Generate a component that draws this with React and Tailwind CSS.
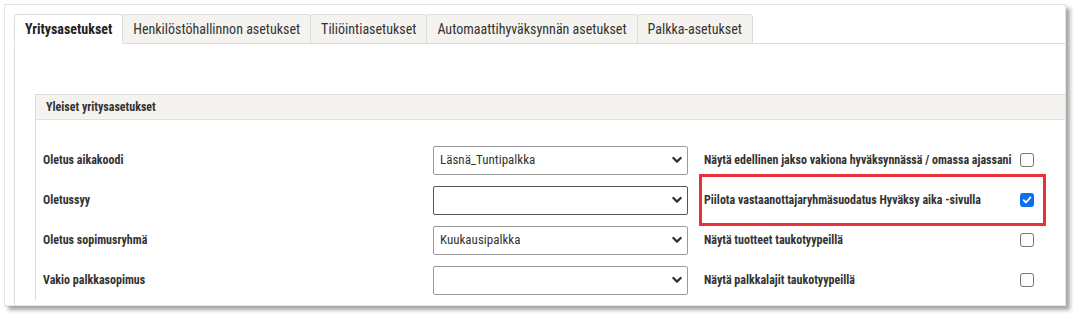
import React from "react";

const FONT = '"Roboto Condensed", "Liberation Sans Narrow", "Arial Narrow", Roboto, sans-serif';

const tabs = [
  { label: "Yritysasetukset", active: true },
  { label: "Henkilöstöhallinnon asetukset" },
  { label: "Tiliöintiasetukset" },
  { label: "Automaattihyväksynnän asetukset" },
  { label: "Palkka-asetukset" },
];

const rows = [
  { label: "Oletus aikakoodi", value: "Läsnä_Tuntipalkka", right: "Näytä edellinen jakso vakiona hyväksynnässä / omassa ajassani", checked: false },
  { label: "Oletussyy", value: "", right: "Piilota vastaanottajaryhmäsuodatus Hyväksy aika -sivulla", checked: true, highlight: true, dark: true },
  { label: "Oletus sopimusryhmä", value: "Kuukausipalkka", right: "Näytä tuotteet taukotyypeillä", checked: false },
  { label: "Vakio palkkasopimus", value: "", right: "Näytä palkkalajit taukotyypeillä", checked: false },
];

function Chevron() {
  return (
    <svg width="10" height="8" viewBox="0 0 10 8" className="shrink-0">
      <polyline points="1.4,2 5,5.6 8.6,2" fill="none" stroke="#333" strokeWidth="2.3" strokeLinecap="round" strokeLinejoin="round" />
    </svg>
  );
}

function Checkbox({ checked }) {
  if (checked) {
    return (
      <div className="w-[14px] h-[14px] rounded-[3px] bg-[#0b6ef5] flex items-center justify-center shrink-0">
        <svg width="10" height="10" viewBox="0 0 10 10">
          <polyline points="1.6,5.2 4,7.5 8.5,2.4" fill="none" stroke="#fff" strokeWidth="1.8" strokeLinecap="round" strokeLinejoin="round" />
        </svg>
      </div>
    );
  }
  return <div className="w-[14px] h-[14px] rounded-[3px] border border-[#767676] bg-white shrink-0" />;
}

export default function App() {
  return (
    <div className="w-[1074px] h-[314px] bg-white pt-[4px] pl-[4px] overflow-hidden" style={{ fontFamily: FONT }}>
      <div className="w-[1062px] h-[302px] bg-white border border-[#e4e4e4] shadow-[4px_4px_4px_rgba(0,0,0,0.35)] pt-[9px] pl-[9px] overflow-hidden">
        {/* Tabs */}
        <div className="flex h-[30px] relative z-10">
          {tabs.map((t) => (
            <div
              key={t.label}
              className={
                "h-[30px] px-[10px] flex items-center text-[14px] rounded-t-[3px] border border-[#dcdcdc] -mr-px " +
                (t.active
                  ? "bg-white border-b-white font-bold text-[#222]"
                  : "bg-[#f4f3ef] text-[#333]")
              }
            >
              {t.label}
            </div>
          ))}
        </div>
        {/* Content */}
        <div className="-mt-px border-t border-l border-[#dcdcdc] h-[300px] pl-[20px] pt-[50px]">
          <div className="border-l border-t border-[#dcdcdc]">
            <div className="h-[25px] bg-[#f4f3ef] border-b border-[#e0e0e0] flex items-center pl-[10px] text-[12px] font-bold text-[#333]">
              Yleiset yritysasetukset
            </div>
            <div className="pt-[20px] pl-[7px]">
              {rows.map((r) => (
                <div key={r.label} className="h-[40px] flex items-stretch">
                  <div className="w-[390px] flex items-center text-[12px] font-bold text-[#333]">{r.label}</div>
                  <div className="flex items-center">
                    <div
                      className={
                        "w-[255px] h-[29px] rounded-[2px] border bg-white flex items-center justify-between pl-[6px] pr-[5px] text-[13px] text-[#333] " +
                        (r.dark ? "border-[#555]" : "border-[#9a9a9a]")
                      }
                    >
                      <span>{r.value}</span>
                      <Chevron />
                    </div>
                  </div>
                  <div className="relative flex items-center pl-[16px]">
                    <div className="w-[316px] text-[12px] font-bold text-[#333] whitespace-nowrap">{r.right}</div>
                    <Checkbox checked={r.checked} />
                    {r.highlight && (
                      <div className="absolute left-[11px] top-[-6px] w-[347px] h-[52px] border-[3px] border-[#e8303e] pointer-events-none" />
                    )}
                  </div>
                </div>
              ))}
            </div>
          </div>
        </div>
      </div>
    </div>
  );
}
